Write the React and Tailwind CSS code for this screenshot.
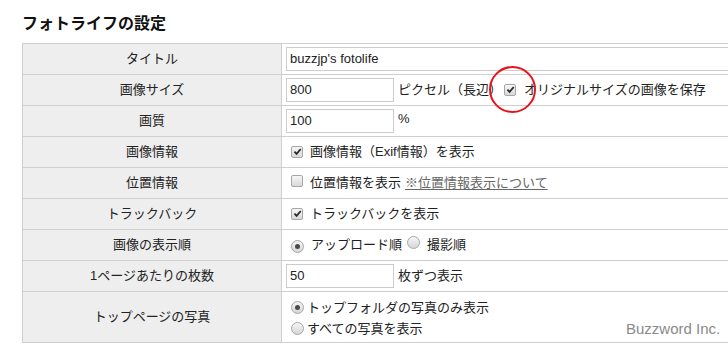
import React from 'react';

const Check = ({ checked }) => (
  <span className="inline-flex h-[12px] w-[12px] shrink-0 items-center justify-center rounded-[2px] border border-[#a6a6a6] bg-linear-to-b from-[#f6f6f6] to-[#d9d9d9]">
    {checked && (
      <svg viewBox="0 0 10 10" className="h-[9px] w-[9px]">
        <path d="M1.6 5.2 L4 7.6 L8.6 2.2" stroke="#2a2a2a" strokeWidth="2" fill="none" />
      </svg>
    )}
  </span>
);

const Radio = ({ checked }) => (
  <span className="inline-flex h-[13px] w-[13px] shrink-0 items-center justify-center rounded-full border border-[#a6a6a6] bg-linear-to-b from-[#f6f6f6] to-[#d6d6d6]">
    {checked && <span className="h-[5px] w-[5px] rounded-full bg-[#4a4a4a]" />}
  </span>
);

const Row = ({ label, tall, children }) => (
  <div className={`flex border-b border-[#cfcfcf] ${tall ? 'h-[51px]' : 'h-[31px]'}`}>
    <div className="flex w-[259px] shrink-0 items-center justify-center border-r border-[#cfcfcf] bg-[#eeeeee]">
      {label}
    </div>
    <div className="flex flex-1 items-center pl-[4px]">{children}</div>
  </div>
);

const Input = ({ value, w }) => (
  <div className={`flex h-[24px] items-center border border-[#cccccc] bg-white pl-[3px] ${w}`}>
    {value}
  </div>
);

export default function App() {
  return (
    <div className="relative h-[344px] w-[728px] overflow-hidden bg-white pl-[22px] pt-[12px] font-['Liberation_Sans','Noto_Sans_CJK_JP',sans-serif] text-[13px] leading-[20px] text-[#222]">
      <h2 className="mb-[7px] h-[24px] text-[16px] font-bold leading-[24px] text-[#111]">フォトライフの設定</h2>

      <div className="w-[760px] border-t border-l border-[#cfcfcf]">
        <Row label="タイトル">
          <Input value="buzzjp's fotolife" w="w-[480px]" />
        </Row>
        <Row label="画像サイズ">
          <Input value="800" w="w-[108px]" />
          <span className="ml-[4px]">ピクセル（長辺）</span>
          <span className="ml-[2px]"><Check checked /></span>
          <span className="ml-[8px]">オリジナルサイズの画像を保存</span>
        </Row>
        <Row label="画質">
          <Input value="100" w="w-[108px]" />
          <span className="ml-[4px] -mt-[5px]">%</span>
        </Row>
        <Row label="画像情報">
          <span className="ml-[5px]"><Check checked /></span>
          <span className="ml-[7px]">画像情報（Exif情報）を表示</span>
        </Row>
        <Row label="位置情報">
          <span className="ml-[5px]"><Check /></span>
          <span className="ml-[7px]">位置情報を表示</span>
          <span className="ml-[4px] text-[#666] underline underline-offset-2">※位置情報表示について</span>
        </Row>
        <Row label="トラックバック">
          <span className="ml-[5px]"><Check checked /></span>
          <span className="ml-[7px]">トラックバックを表示</span>
        </Row>
        <Row label="画像の表示順">
          <span className="ml-[5px]"><Radio checked /></span>
          <span className="ml-[7px]">アップロード順</span>
          <span className="ml-[5px]"><Radio /></span>
          <span className="ml-[7px]">撮影順</span>
        </Row>
        <Row label="1ページあたりの枚数">
          <Input value="50" w="w-[108px]" />
          <span className="ml-[4px]">枚ずつ表示</span>
        </Row>
        <Row label="トップページの写真" tall>
          <div className="ml-[5px] mt-[2px] flex flex-col gap-[1px]">
            <div className="flex items-center">
              <Radio checked />
              <span className="ml-[3px]">トップフォルダの写真のみ表示</span>
            </div>
            <div className="flex items-center">
              <Radio />
              <span className="ml-[3px]">すべての写真を表示</span>
            </div>
          </div>
        </Row>
      </div>

      <div className="absolute left-[489px] top-[66px] h-[47px] w-[47px] rounded-full border-2 border-[#e8121a]" />
      <div className="absolute left-[626px] top-[319px] text-[15px] leading-[20px] text-[#8a8a8a]">Buzzword Inc.</div>
    </div>
  );
}
